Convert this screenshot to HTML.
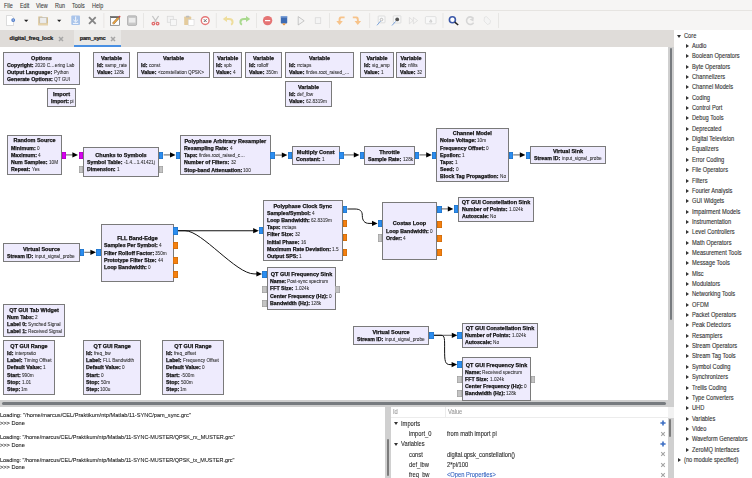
<!DOCTYPE html>
<html><head><meta charset="utf-8"><style>
*{box-sizing:border-box}
body{margin:0;width:752px;height:478px;overflow:hidden;position:relative;background:#f6f5f4;font-family:"Liberation Sans",sans-serif}
.abs{position:absolute}
#menu{position:absolute;left:0;top:0;width:752px;height:11px;background:#f6f5f4;border-bottom:1px solid #e6e4e1}
#menu span{position:absolute;top:1.6px;font-size:6.4px;color:#3a3a3a;line-height:8px;transform-origin:0 50%;transform:scaleX(0.85);-webkit-text-stroke:0.08px #3a3a3a}
#tool{position:absolute;left:0;top:11px;width:752px;height:19px;background:#f6f5f4}
#tabs{position:absolute;left:0;top:30px;width:674px;height:17px;background:#dfdcd9}
#canvas{position:absolute;left:0;top:47px;width:668px;height:353px;background:#fff;overflow:hidden}
.blk{position:absolute;background:#eeebfd;border:1px solid #7a7a7a;white-space:nowrap}
.blk .t{position:absolute;left:0;right:0;will-change:transform;font-weight:bold;text-align:center;color:#111;font-size:5.5px;line-height:8px;-webkit-text-stroke:0.25px #111}
.blk .r{position:absolute;left:2.6px;will-change:transform;line-height:8px;font-size:5.25px}
.blk .r b{color:#111;margin-right:1.3px;-webkit-text-stroke:0.25px #111}
.blk .r i{font-style:normal;color:#2e2e2e;font-size:5.3px;display:inline-block;transform-origin:0 50%;transform:scaleX(0.885);-webkit-text-stroke:0.08px #2e2e2e}
.pt{position:absolute;width:4.5px;height:7.2px;box-shadow:inset 0 0 0 0.5px rgba(0,0,0,0.22)}
svg.cv{position:absolute;left:0;top:0;pointer-events:none}
.ti{position:absolute;width:5px;height:8px}
.trt{position:absolute;left:0;top:2px;width:0;height:0;border-left:3px solid #333;border-top:2.2px solid transparent;border-bottom:2.2px solid transparent}
.tdn{position:absolute;left:0;top:3px;width:0;height:0;border-top:3px solid #333;border-left:2.2px solid transparent;border-right:2.2px solid transparent}
.tt{position:absolute;font-size:6.8px;line-height:8px;color:#333;white-space:nowrap;transform-origin:0 50%;transform:scaleX(0.836);-webkit-text-stroke:0.12px #333}
#right{position:absolute;left:674px;top:30px;width:78px;height:448px;background:#fff;overflow:hidden}
#console{position:absolute;left:0;top:407px;width:385px;height:71px;background:#fff;overflow:hidden}
#console{} .ct{position:absolute;left:0;font-size:6.2px;line-height:7px;color:#222;white-space:nowrap;transform-origin:0 50%;transform:scaleX(0.907);-webkit-text-stroke:0.1px #222}
#vars{position:absolute;left:391px;top:407px;width:277px;height:71px;background:#fff;overflow:hidden}
.vt{position:absolute;font-size:6.6px;line-height:8px;color:#2a2a2a;white-space:nowrap;transform-origin:0 50%;transform:scaleX(0.875);-webkit-text-stroke:0.1px currentColor}
</style></head><body>
<div id="menu"><span style="left:4.2px">File</span><span style="left:19.6px">Edit</span><span style="left:36.1px">View</span><span style="left:55.1px">Run</span><span style="left:72.2px">Tools</span><span style="left:92.1px">Help</span></div>
<div id="tool"></div>
<svg class="abs" style="left:0;top:0" width="752" height="30" viewBox="0 0 752 30">
<g>
<path d="M6.5,15.5 H11.8 L13.5,17.2 V25.5 H6.5 Z" fill="#fff" stroke="#c8c8c8" stroke-width="0.6"/>
<circle cx="13.2" cy="20.1" r="1.9" fill="#4a78c8"/><path d="M13.2,19.1 V21.1" stroke="#fff" stroke-width="0.6"/>
<path d="M24,19.7 H28.4 L26.2,21.9 Z" fill="#222"/>
<path d="M38.3,16.4 H42 L43,17.2 H48 V25.2 H38.3 Z" fill="#d6bf8e"/>
<rect x="39.8" y="17.6" width="6.8" height="5.6" fill="#ececec" stroke="#b8b8b8" stroke-width="0.5"/>
<rect x="38.3" y="23.3" width="9.7" height="1.9" fill="#e6d3ab"/>
<path d="M57.1,19.7 H61.3 L59.2,21.9 Z" fill="#222"/>
<rect x="71.3" y="15.5" width="8.7" height="9.6" rx="1" fill="#a9c4ea"/>
<path d="M75.65,16.5 V21.5 M73.4,19.8 L75.65,22 L77.9,19.8 M73,23.4 H78.3" stroke="#fff" stroke-width="0.9" fill="none"/>
<path d="M89,17.2 L95.7,23.9 M95.7,17.2 L89,23.9" stroke="#858585" stroke-width="1.8"/>
<path d="M103.9,13 V28" stroke="#dedcd9" stroke-width="0.6"/>
<rect x="110.6" y="16.6" width="8.8" height="8.7" fill="#fff" stroke="#6e6e6e" stroke-width="0.7"/>
<rect x="110.6" y="16.6" width="8.8" height="1.3" fill="#5a5a5a"/>
<path d="M113,23.8 L118.6,17.8" stroke="#7a5a30" stroke-width="2.2"/><path d="M113,23.8 L118.6,17.8" stroke="#f2a842" stroke-width="1.5"/>
<circle cx="119.6" cy="16.6" r="0.9" fill="#e04040"/>
<rect x="127.5" y="15.8" width="9.1" height="9.6" rx="1.2" fill="#c9c9c9" stroke="#9a9a9a" stroke-width="0.6"/>
<rect x="128.8" y="18" width="6.6" height="4.6" fill="#ececec"/>
<path d="M143.5,13 V28" stroke="#dedcd9" stroke-width="0.6"/>
<path d="M152.4,16 L156.4,22 M158.6,16 L154.6,22" stroke="#c4c4c4" stroke-width="1.3"/>
<circle cx="153.4" cy="23.6" r="1.3" fill="none" stroke="#e06c6c" stroke-width="1.3"/>
<circle cx="157.6" cy="23.6" r="1.3" fill="none" stroke="#e06c6c" stroke-width="1.3"/>
<rect x="167.2" y="16.2" width="6" height="6" fill="#f3f3f3" stroke="#d2d2d2" stroke-width="0.6"/>
<rect x="170.6" y="19.3" width="6" height="6" fill="#f6f6f6" stroke="#d2d2d2" stroke-width="0.6"/>
<rect x="184.2" y="16.6" width="7" height="8.4" rx="0.6" fill="#e4cb9c"/>
<rect x="186" y="15.8" width="3.4" height="1.6" rx="0.5" fill="#bdbdbd"/>
<rect x="188.2" y="19.6" width="5.8" height="5.7" fill="#fff" stroke="#cfcfcf" stroke-width="0.5"/>
<circle cx="205.2" cy="20.6" r="3.9" fill="#fff" stroke="#e57676" stroke-width="1.4"/>
<path d="M203.8,19.2 L206.6,22 M206.6,19.2 L203.8,22" stroke="#6a6a6a" stroke-width="1"/>
<path d="M216.3,13 V28" stroke="#dedcd9" stroke-width="0.6"/>
<path d="M226.5,19 H229 C231.6,19 232.6,20.6 232.6,22.2 C232.6,23.4 231.9,24.2 231,24.6" fill="none" stroke="#eedd9c" stroke-width="2"/>
<path d="M222.8,19 L227,15.9 L227,22.1 Z" fill="#eedd9c"/>
<path d="M246.5,19 H244 C241.4,19 240.4,20.6 240.4,22.2 C240.4,23.4 241.1,24.2 242,24.6" fill="none" stroke="#a9d98e" stroke-width="2"/>
<path d="M250.2,19 L246,15.9 L246,22.1 Z" fill="#a9d98e"/>
<path d="M256.5,13 V28" stroke="#dedcd9" stroke-width="0.6"/>
<circle cx="267.6" cy="20.6" r="4.7" fill="#e57474"/>
<rect x="265" y="20" width="5.2" height="1.2" fill="#fff"/>
<rect x="280.8" y="16" width="6.4" height="7.6" rx="0.8" fill="#3d6bb3"/>
<rect x="280.8" y="16" width="6.4" height="1.6" fill="#7b9fd6"/>
<path d="M282,23.5 H286 L284,25.6 Z" fill="#f0922e"/>
<path d="M298.2,16.6 L304.2,20.8 L298.2,25 Z" fill="#f3f3f3" stroke="#a8a8a8" stroke-width="0.6"/>
<rect x="315.2" y="17.8" width="5.6" height="5.6" fill="#f4f4f4" stroke="#d0d0d0" stroke-width="0.6"/>
<path d="M329.5,13 V28" stroke="#dedcd9" stroke-width="0.6"/>
<path d="M344.6,16.5 H341 C339,16.5 338.6,18 338.6,20 V21 H336.3 L339.6,25 L342.8,21 H340.5 V20 C340.5,18.8 341,18.3 342,18.3 H344.6 Z" fill="#f7c38a"/>
<path d="M352.8,16.5 H356.4 C358.4,16.5 358.8,18 358.8,20 V21 H361.1 L357.8,25 L354.6,21 H356.9 V20 C356.9,18.8 356.4,18.3 355.4,18.3 H352.8 Z" fill="#f7c38a"/>
<path d="M369.6,13 V28" stroke="#dedcd9" stroke-width="0.6"/>
<rect x="378.2" y="16" width="6.8" height="6.8" rx="0.6" fill="#f8f8f8" stroke="#cfcfcf" stroke-width="0.6"/>
<circle cx="381.5" cy="19.6" r="1.3" fill="none" stroke="#9a9a9a" stroke-width="0.6"/>
<path d="M377,25.3 L380.6,21" stroke="#7fa6dc" stroke-width="1"/>
<rect x="393.3" y="15.8" width="7.6" height="7.2" rx="0.6" fill="#f8f8f8" stroke="#cfcfcf" stroke-width="0.6"/>
<circle cx="397.2" cy="19.4" r="1.9" fill="#555"/>
<path d="M392,25.5 L395.6,21.4" stroke="#7fa6dc" stroke-width="1"/>
<path d="M409.4,17.4 L413,20.6 L409.4,23.8 Z M413.4,17.4 L417.6,20.6 L413.4,23.8 Z" fill="none" stroke="#d4d4d4" stroke-width="0.6"/>
<rect x="425.4" y="16.6" width="10.6" height="7.2" rx="1" fill="#f8f8f8" stroke="#d2d2d2" stroke-width="0.6"/>
<path d="M429.6,22 L430.8,19.6 L432,22 Z" fill="none" stroke="#aaa" stroke-width="0.5"/>
<path d="M443,13 V28" stroke="#dedcd9" stroke-width="0.6"/>
<circle cx="452.4" cy="19.8" r="3" fill="#fff" stroke="#3b58a8" stroke-width="1.6"/>
<path d="M454.8,22.2 L458.2,25" stroke="#222" stroke-width="1.5"/>
<path d="M473.2,18.2 A3.8,3.8 0 1 0 473.6,22.6" fill="none" stroke="#d6d6d6" stroke-width="1.6"/>
<path d="M469.6,19.4 L473.8,17.4 L473.4,21.6 Z" fill="#d6d6d6"/>
<path d="M484.5,17.2 L486.5,16.6 L490.5,20.8 L490,23.5 L487.5,24.5 L484,21 Z" fill="#f4f4f4" stroke="#dadada" stroke-width="0.6"/>
<path d="M498.5,13 V28" stroke="#dedcd9" stroke-width="0.6"/>
</g></svg>

<div id="tabs">
 <div class="abs" style="left:74px;top:0;width:47px;height:17px;background:#e9e8e6"></div>
 <div class="abs" style="left:74px;top:15px;width:47px;height:1.8px;background:#4a90e2"></div>
 <div class="abs" style="left:9.6px;top:3.6px;font-size:5.7px;font-weight:bold;color:#222;line-height:8px;letter-spacing:-0.1px;-webkit-text-stroke:0.22px #222">digital_freq_lock</div>
 <svg class="abs" style="left:58px;top:5.8px" width="6" height="6" viewBox="0 0 6 6"><path d="M1,1 L5,5 M5,1 L1,5" stroke="#a6a6a6" stroke-width="1.5"/></svg>
 <div class="abs" style="left:79.7px;top:3.6px;font-size:5.7px;font-weight:bold;color:#222;line-height:8px;letter-spacing:-0.25px;-webkit-text-stroke:0.22px #222">pam_sync</div>
 <svg class="abs" style="left:109.6px;top:5.8px" width="6" height="6" viewBox="0 0 6 6"><path d="M1,1 L5,5 M5,1 L1,5" stroke="#a6a6a6" stroke-width="1.5"/></svg>
</div>
<div id="canvas"></div>
<div class="abs" style="left:668px;top:47px;width:6px;height:360px;background:#cfcfcf"></div>
<div class="abs" style="left:669.6px;top:48.2px;width:2.5px;height:272px;background:#777b7f;border-radius:1.2px"></div>
<div class="abs" style="left:0;top:400.4px;width:668px;height:6.4px;background:#cfcfcf"></div>
<div class="abs" style="left:1.5px;top:402px;width:664.5px;height:3.2px;background:#777b7f;border-radius:1.5px"></div>
<div class="blk" style="left:3px;top:52px;width:77px;height:33px"><div class="t" style="top:0.00px;transform:translateY(0.80px)">Options</div><div class="r" style="top:8.00px;transform:translateY(0.00px)"><b>Copyright:</b><i>2020 C…ering Lab</i></div><div class="r" style="top:15.00px;transform:translateY(0.20px)"><b>Output Language:</b><i>Python</i></div><div class="r" style="top:22.00px;transform:translateY(0.40px)"><b>Generate Options:</b><i>QT GUI</i></div></div><div class="blk" style="left:47px;top:88px;width:29px;height:18.5px"><div class="t" style="top:0.00px;transform:translateY(0.75px)">Import</div><div class="r" style="top:7.00px;transform:translateY(0.95px)"><b>Import:</b><i>pi</i></div></div><div class="blk" style="left:93px;top:52px;width:37px;height:26px"><div class="t" style="top:0.00px;transform:translateY(0.90px)">Variable</div><div class="r" style="top:8.00px;transform:translateY(0.10px)"><b>Id:</b><i>samp_rate</i></div><div class="r" style="top:15.00px;transform:translateY(0.30px)"><b>Value:</b><i>128k</i></div></div><div class="blk" style="left:137px;top:52px;width:73px;height:26px"><div class="t" style="top:0.00px;transform:translateY(0.90px)">Variable</div><div class="r" style="top:8.00px;transform:translateY(0.10px)"><b>Id:</b><i>const</i></div><div class="r" style="top:15.00px;transform:translateY(0.30px)"><b>Value:</b><i>&lt;constellation QPSK&gt;</i></div></div><div class="blk" style="left:212.5px;top:52px;width:29.5px;height:26px"><div class="t" style="top:0.00px;transform:translateY(0.90px)">Variable</div><div class="r" style="top:8.00px;transform:translateY(0.10px)"><b>Id:</b><i>spb</i></div><div class="r" style="top:15.00px;transform:translateY(0.30px)"><b>Value:</b><i>4</i></div></div><div class="blk" style="left:245px;top:52px;width:37px;height:26px"><div class="t" style="top:0.00px;transform:translateY(0.90px)">Variable</div><div class="r" style="top:8.00px;transform:translateY(0.10px)"><b>Id:</b><i>rolloff</i></div><div class="r" style="top:15.00px;transform:translateY(0.30px)"><b>Value:</b><i>350m</i></div></div><div class="blk" style="left:285px;top:52px;width:69px;height:26px"><div class="t" style="top:0.00px;transform:translateY(0.90px)">Variable</div><div class="r" style="top:8.00px;transform:translateY(0.10px)"><b>Id:</b><i>rrctaps</i></div><div class="r" style="top:15.00px;transform:translateY(0.30px)"><b>Value:</b><i>firdes.root_raised_…</i></div></div><div class="blk" style="left:285px;top:81px;width:47px;height:26px"><div class="t" style="top:0.00px;transform:translateY(0.90px)">Variable</div><div class="r" style="top:8.00px;transform:translateY(0.10px)"><b>Id:</b><i>def_lbw</i></div><div class="r" style="top:15.00px;transform:translateY(0.30px)"><b>Value:</b><i>62.8319m</i></div></div><div class="blk" style="left:360px;top:52px;width:34px;height:26px"><div class="t" style="top:0.00px;transform:translateY(0.90px)">Variable</div><div class="r" style="top:8.00px;transform:translateY(0.10px)"><b>Id:</b><i>sig_amp</i></div><div class="r" style="top:15.00px;transform:translateY(0.30px)"><b>Value:</b><i>1</i></div></div><div class="blk" style="left:396px;top:52px;width:30px;height:26px"><div class="t" style="top:0.00px;transform:translateY(0.90px)">Variable</div><div class="r" style="top:8.00px;transform:translateY(0.10px)"><b>Id:</b><i>nfilts</i></div><div class="r" style="top:15.00px;transform:translateY(0.30px)"><b>Value:</b><i>32</i></div></div><div class="blk" style="left:7px;top:134.5px;width:55px;height:40.5px"><div class="t" style="top:0.50px;transform:translateY(0.45px)">Random Source</div><div class="r" style="top:7.50px;transform:translateY(0.65px)"><b>Minimum:</b><i>0</i></div><div class="r" style="top:14.50px;transform:translateY(0.85px)"><b>Maximum:</b><i>4</i></div><div class="r" style="top:22.50px;transform:translateY(0.05px)"><b>Num Samples:</b><i>10M</i></div><div class="r" style="top:29.50px;transform:translateY(0.25px)"><b>Repeat:</b><i>Yes</i></div></div><div class="blk" style="left:83px;top:147px;width:76px;height:29.5px"><div class="t" style="top:2.00px;transform:translateY(0.65px)">Chunks to Symbols</div><div class="r" style="top:9.00px;transform:translateY(0.85px)"><b>Symbol Table:</b><i>-1.4…1.41421j</i></div><div class="r" style="top:17.00px;transform:translateY(0.05px)"><b>Dimension:</b><i>1</i></div></div><div class="blk" style="left:180px;top:135px;width:90.5px;height:40px"><div class="t" style="top:0.00px;transform:translateY(0.70px)">Polyphase Arbitrary Resampler</div><div class="r" style="top:7.00px;transform:translateY(0.90px)"><b>Resampling Rate:</b><i>4</i></div><div class="r" style="top:15.00px;transform:translateY(0.10px)"><b>Taps:</b><i>firdes.root_raised_c…</i></div><div class="r" style="top:22.00px;transform:translateY(0.30px)"><b>Number of Filters:</b><i>32</i></div><div class="r" style="top:29.00px;transform:translateY(0.50px)"><b>Stop-band Attenuation:</b><i>100</i></div></div><div class="blk" style="left:292px;top:145.5px;width:47.5px;height:19px"><div class="t" style="top:0.50px;transform:translateY(0.50px)">Multiply Const</div><div class="r" style="top:7.50px;transform:translateY(0.70px)"><b>Constant:</b><i>1</i></div></div><div class="blk" style="left:364px;top:145.5px;width:51px;height:19px"><div class="t" style="top:0.50px;transform:translateY(0.50px)">Throttle</div><div class="r" style="top:7.50px;transform:translateY(0.70px)"><b>Sample Rate:</b><i>128k</i></div></div><div class="blk" style="left:436.4px;top:127.5px;width:72.5px;height:54.5px"><div class="t" style="top:0.50px;transform:translateY(0.25px)">Channel Model</div><div class="r" style="top:7.50px;transform:translateY(0.45px)"><b>Noise Voltage:</b><i>10m</i></div><div class="r" style="top:14.50px;transform:translateY(0.65px)"><b>Frequency Offset:</b><i>0</i></div><div class="r" style="top:21.50px;transform:translateY(0.85px)"><b>Epsilon:</b><i>1</i></div><div class="r" style="top:29.50px;transform:translateY(0.05px)"><b>Taps:</b><i>1</i></div><div class="r" style="top:36.50px;transform:translateY(0.25px)"><b>Seed:</b><i>0</i></div><div class="r" style="top:43.50px;transform:translateY(0.45px)"><b>Block Tag Propagation:</b><i>No</i></div></div><div class="blk" style="left:530px;top:145.5px;width:76px;height:18.5px"><div class="t" style="top:0.50px;transform:translateY(0.25px)">Virtual Sink</div><div class="r" style="top:7.50px;transform:translateY(0.45px)"><b>Stream ID:</b><i>input_signal_probe</i></div></div><div class="blk" style="left:3px;top:243px;width:77px;height:18.5px"><div class="t" style="top:0.00px;transform:translateY(0.75px)">Virtual Source</div><div class="r" style="top:7.00px;transform:translateY(0.95px)"><b>Stream ID:</b><i>input_signal_probe</i></div></div><div class="blk" style="left:100.5px;top:223.5px;width:73px;height:58px"><div class="t" style="top:9.50px;transform:translateY(0.20px)">FLL Band-Edge</div><div class="r" style="top:16.50px;transform:translateY(0.40px)"><b>Samples Per Symbol:</b><i>4</i></div><div class="r" style="top:23.50px;transform:translateY(0.60px)"><b>Filter Rolloff Factor:</b><i>350m</i></div><div class="r" style="top:30.50px;transform:translateY(0.80px)"><b>Prototype Filter Size:</b><i>44</i></div><div class="r" style="top:38.50px;transform:translateY(0.00px)"><b>Loop Bandwidth:</b><i>0</i></div></div><div class="blk" style="left:263.3px;top:200px;width:79.5px;height:61.2px"><div class="t" style="top:0.00px;transform:translateY(0.50px)">Polyphase Clock Sync</div><div class="r" style="top:7.00px;transform:translateY(0.70px)"><b>Samples/Symbol:</b><i>4</i></div><div class="r" style="top:14.00px;transform:translateY(0.90px)"><b>Loop Bandwidth:</b><i>62.8319m</i></div><div class="r" style="top:22.00px;transform:translateY(0.10px)"><b>Taps:</b><i>rrctaps</i></div><div class="r" style="top:29.00px;transform:translateY(0.30px)"><b>Filter Size:</b><i>32</i></div><div class="r" style="top:36.00px;transform:translateY(0.50px)"><b>Initial Phase:</b><i>16</i></div><div class="r" style="top:43.00px;transform:translateY(0.70px)"><b>Maximum Rate Deviation:</b><i>1.5</i></div><div class="r" style="top:50.00px;transform:translateY(0.90px)"><b>Output SPS:</b><i>1</i></div></div><div class="blk" style="left:382.3px;top:201.5px;width:55px;height:58px"><div class="t" style="top:16.50px;transform:translateY(0.40px)">Costas Loop</div><div class="r" style="top:23.50px;transform:translateY(0.60px)"><b>Loop Bandwidth:</b><i>0</i></div><div class="r" style="top:30.50px;transform:translateY(0.80px)"><b>Order:</b><i>4</i></div></div><div class="blk" style="left:458px;top:196.5px;width:76px;height:25px"><div class="t" style="top:-0.50px;transform:translateY(0.90px)">QT GUI Constellation Sink</div><div class="r" style="top:7.50px;transform:translateY(0.10px)"><b>Number of Points:</b><i>1.024k</i></div><div class="r" style="top:14.50px;transform:translateY(0.30px)"><b>Autoscale:</b><i>No</i></div></div><div class="blk" style="left:266.5px;top:266.5px;width:69px;height:43.5px"><div class="t" style="top:1.50px;transform:translateY(0.95px)">QT GUI Frequency Sink</div><div class="r" style="top:9.50px;transform:translateY(0.15px)"><b>Name:</b><i>Post-sync spectrum</i></div><div class="r" style="top:16.50px;transform:translateY(0.35px)"><b>FFT Size:</b><i>1.024k</i></div><div class="r" style="top:23.50px;transform:translateY(0.55px)"><b>Center Frequency (Hz):</b><i>0</i></div><div class="r" style="top:30.50px;transform:translateY(0.75px)"><b>Bandwidth (Hz):</b><i>128k</i></div></div><div class="blk" style="left:3px;top:304px;width:62px;height:33px"><div class="t" style="top:0.00px;transform:translateY(0.80px)">QT GUI Tab Widget</div><div class="r" style="top:8.00px;transform:translateY(0.00px)"><b>Num Tabs:</b><i>2</i></div><div class="r" style="top:15.00px;transform:translateY(0.20px)"><b>Label 0:</b><i>Synched Signal</i></div><div class="r" style="top:22.00px;transform:translateY(0.40px)"><b>Label 1:</b><i>Received Signal</i></div></div><div class="blk" style="left:3px;top:340px;width:52px;height:54.5px"><div class="t" style="top:0.00px;transform:translateY(0.75px)">QT GUI Range</div><div class="r" style="top:7.00px;transform:translateY(0.95px)"><b>Id:</b><i>interpratio</i></div><div class="r" style="top:15.00px;transform:translateY(0.15px)"><b>Label:</b><i>Timing Offset</i></div><div class="r" style="top:22.00px;transform:translateY(0.35px)"><b>Default Value:</b><i>1</i></div><div class="r" style="top:29.00px;transform:translateY(0.55px)"><b>Start:</b><i>990m</i></div><div class="r" style="top:36.00px;transform:translateY(0.75px)"><b>Stop:</b><i>1.01</i></div><div class="r" style="top:43.00px;transform:translateY(0.95px)"><b>Step:</b><i>1m</i></div></div><div class="blk" style="left:82.5px;top:340px;width:58.5px;height:54.5px"><div class="t" style="top:0.00px;transform:translateY(0.75px)">QT GUI Range</div><div class="r" style="top:7.00px;transform:translateY(0.95px)"><b>Id:</b><i>freq_bw</i></div><div class="r" style="top:15.00px;transform:translateY(0.15px)"><b>Label:</b><i>FLL Bandwidth</i></div><div class="r" style="top:22.00px;transform:translateY(0.35px)"><b>Default Value:</b><i>0</i></div><div class="r" style="top:29.00px;transform:translateY(0.55px)"><b>Start:</b><i>0</i></div><div class="r" style="top:36.00px;transform:translateY(0.75px)"><b>Stop:</b><i>50m</i></div><div class="r" style="top:43.00px;transform:translateY(0.95px)"><b>Step:</b><i>100u</i></div></div><div class="blk" style="left:162px;top:340px;width:62px;height:54.5px"><div class="t" style="top:0.00px;transform:translateY(0.75px)">QT GUI Range</div><div class="r" style="top:7.00px;transform:translateY(0.95px)"><b>Id:</b><i>freq_offset</i></div><div class="r" style="top:15.00px;transform:translateY(0.15px)"><b>Label:</b><i>Frequency Offset</i></div><div class="r" style="top:22.00px;transform:translateY(0.35px)"><b>Default Value:</b><i>0</i></div><div class="r" style="top:29.00px;transform:translateY(0.55px)"><b>Start:</b><i>-500m</i></div><div class="r" style="top:36.00px;transform:translateY(0.75px)"><b>Stop:</b><i>500m</i></div><div class="r" style="top:43.00px;transform:translateY(0.95px)"><b>Step:</b><i>1m</i></div></div><div class="blk" style="left:353.3px;top:326px;width:76.2px;height:18.5px"><div class="t" style="top:0.00px;transform:translateY(0.75px)">Virtual Source</div><div class="r" style="top:7.00px;transform:translateY(0.95px)"><b>Stream ID:</b><i>input_signal_probe</i></div></div><div class="blk" style="left:461.6px;top:322.5px;width:76px;height:25px"><div class="t" style="top:-0.50px;transform:translateY(0.90px)">QT GUI Constellation Sink</div><div class="r" style="top:7.50px;transform:translateY(0.10px)"><b>Number of Points:</b><i>1.024k</i></div><div class="r" style="top:14.50px;transform:translateY(0.30px)"><b>Autoscale:</b><i>No</i></div></div><div class="blk" style="left:461.6px;top:357.2px;width:69px;height:43.5px"><div class="t" style="top:1.80px;transform:translateY(0.65px)">QT GUI Frequency Sink</div><div class="r" style="top:8.80px;transform:translateY(0.85px)"><b>Name:</b><i>Received spectrum</i></div><div class="r" style="top:16.80px;transform:translateY(0.05px)"><b>FFT Size:</b><i>1.024k</i></div><div class="r" style="top:23.80px;transform:translateY(0.25px)"><b>Center Frequency (Hz):</b><i>0</i></div><div class="r" style="top:30.80px;transform:translateY(0.45px)"><b>Bandwidth (Hz):</b><i>128k</i></div></div>
<div class="pt" style="left:61.9px;top:151.5px;background:#d600f0"></div><div class="pt" style="left:78.5px;top:151.5px;background:#d600f0"></div><div class="pt" style="left:78.5px;top:166.2px;background:#c4c4c4"></div><div class="pt" style="left:158.9px;top:151.5px;background:#2b8df0"></div><div class="pt" style="left:158.9px;top:166.2px;background:#c4c4c4"></div><div class="pt" style="left:175.5px;top:151.7px;background:#2b8df0"></div><div class="pt" style="left:270.4px;top:151.7px;background:#2b8df0"></div><div class="pt" style="left:287.5px;top:151.5px;background:#2b8df0"></div><div class="pt" style="left:339.4px;top:151.5px;background:#2b8df0"></div><div class="pt" style="left:359.5px;top:151.5px;background:#2b8df0"></div><div class="pt" style="left:414.9px;top:151.5px;background:#2b8df0"></div><div class="pt" style="left:431.9px;top:151.5px;background:#2b8df0"></div><div class="pt" style="left:508.8px;top:151.5px;background:#2b8df0"></div><div class="pt" style="left:525.5px;top:151.5px;background:#2b8df0"></div><div class="pt" style="left:79.9px;top:249.3px;background:#2b8df0"></div><div class="pt" style="left:96.0px;top:248.9px;background:#2b8df0"></div><div class="pt" style="left:173.4px;top:227.4px;background:#2b8df0"></div><div class="pt" style="left:173.4px;top:241.6px;background:#f5800f"></div><div class="pt" style="left:173.4px;top:256.5px;background:#f5800f"></div><div class="pt" style="left:173.4px;top:270.5px;background:#f5800f"></div><div class="pt" style="left:258.8px;top:227.2px;background:#2b8df0"></div><div class="pt" style="left:342.7px;top:205.6px;background:#2b8df0"></div><div class="pt" style="left:342.7px;top:219.9px;background:#f5800f"></div><div class="pt" style="left:342.7px;top:234.2px;background:#f5800f"></div><div class="pt" style="left:342.7px;top:249.1px;background:#f5800f"></div><div class="pt" style="left:377.8px;top:220.0px;background:#2b8df0"></div><div class="pt" style="left:377.8px;top:234.4px;background:#c4c4c4"></div><div class="pt" style="left:437.2px;top:205.7px;background:#2b8df0"></div><div class="pt" style="left:437.2px;top:220.5px;background:#f5800f"></div><div class="pt" style="left:437.2px;top:234.9px;background:#f5800f"></div><div class="pt" style="left:437.2px;top:249.2px;background:#f5800f"></div><div class="pt" style="left:453.5px;top:205.4px;background:#2b8df0"></div><div class="pt" style="left:262.0px;top:270.6px;background:#2b8df0"></div><div class="pt" style="left:262.0px;top:285.7px;background:#c4c4c4"></div><div class="pt" style="left:262.0px;top:299.7px;background:#c4c4c4"></div><div class="pt" style="left:335.4px;top:285.7px;background:#c4c4c4"></div><div class="pt" style="left:429.4px;top:331.9px;background:#2b8df0"></div><div class="pt" style="left:457.1px;top:332.2px;background:#2b8df0"></div><div class="pt" style="left:457.1px;top:361.3px;background:#2b8df0"></div><div class="pt" style="left:457.1px;top:375.5px;background:#c4c4c4"></div><div class="pt" style="left:457.1px;top:389.6px;background:#c4c4c4"></div><div class="pt" style="left:530.5px;top:375.5px;background:#c4c4c4"></div>
<svg class="cv" width="752" height="478" viewBox="0 0 752 478"><path d="M66,154.9 L74,154.9" stroke="#6a6a6a" stroke-width="1.1" fill="none"/><path d="M72.4,152.3 L78,154.9 L72.4,157.5 Z" fill="#000"/><path d="M163.6,154.9 L171.6,154.9" stroke="#6a6a6a" stroke-width="1.1" fill="none"/><path d="M170.0,152.3 L175.6,154.9 L170.0,157.5 Z" fill="#000"/><path d="M275.2,155.1 L283.4,155.1" stroke="#6a6a6a" stroke-width="1.1" fill="none"/><path d="M281.79999999999995,152.5 L287.4,155.1 L281.79999999999995,157.7 Z" fill="#000"/><path d="M343.8,154.9 L355.4,154.9" stroke="#6a6a6a" stroke-width="1.1" fill="none"/><path d="M353.79999999999995,152.3 L359.4,154.9 L353.79999999999995,157.5 Z" fill="#000"/><path d="M419.4,154.9 L427.8,154.9" stroke="#6a6a6a" stroke-width="1.1" fill="none"/><path d="M426.2,152.3 L431.8,154.9 L426.2,157.5 Z" fill="#000"/><path d="M513.2,154.9 L521.4,154.9" stroke="#6a6a6a" stroke-width="1.1" fill="none"/><path d="M519.8,152.3 L525.4,154.9 L519.8,157.5 Z" fill="#000"/><path d="M84.3,252.3 L92,252.3" stroke="#6a6a6a" stroke-width="1.1" fill="none"/><path d="M90.4,249.70000000000002 L96,252.3 L90.4,254.9 Z" fill="#000"/><path d="M178.2,230.7 L254.8,230.7" stroke="#111" stroke-width="1.1" fill="none"/><path d="M253.20000000000002,228.1 L258.8,230.7 L253.20000000000002,233.29999999999998 Z" fill="#000"/><path d="M441,208.9 L449.4,208.9" stroke="#6a6a6a" stroke-width="1.1" fill="none"/><path d="M447.79999999999995,206.3 L453.4,208.9 L447.79999999999995,211.5 Z" fill="#000"/><path d="M434,335.3 L453.4,335.3" stroke="#6a6a6a" stroke-width="1.1" fill="none"/><path d="M451.79999999999995,332.7 L457.4,335.3 L451.79999999999995,337.90000000000003 Z" fill="#000"/><path d="M178,230.7 L185,230.7 C202,230.7 236,273.9 254,273.9 L257,273.9" stroke="#111" stroke-width="1" fill="none"/><path d="M256.4,271.29999999999995 L262,273.9 L256.4,276.5 Z" fill="#000"/><path d="M347.4,209 L355,209 C360,209 362.3,211 362.3,215.5 C362.3,220.5 364.5,223.4 369,223.4 L372.5,223.4" stroke="#111" stroke-width="1" fill="none"/><path d="M372.0,220.8 L377.6,223.4 L372.0,226.0 Z" fill="#000"/><path d="M434,335.3 L441,335.3 C445,335.3 444.6,339 444.6,350 C444.6,361 445,364.6 450,364.6 L453,364.6" stroke="#111" stroke-width="1" fill="none"/><path d="M451.59999999999997,362.0 L457.2,364.6 L451.59999999999997,367.20000000000005 Z" fill="#000"/></svg>
<div id="right"></div>
<div class="ti" style="top:31.60px;left:677px"><span class="tdn"></span></div><div class="tt" style="top:31.60px;left:684px">Core</div><div class="ti" style="top:41.95px;left:685.5px"><span class="trt"></span></div><div class="tt" style="top:41.95px;left:692px">Audio</div><div class="ti" style="top:52.30px;left:685.5px"><span class="trt"></span></div><div class="tt" style="top:52.30px;left:692px">Boolean Operators</div><div class="ti" style="top:62.65px;left:685.5px"><span class="trt"></span></div><div class="tt" style="top:62.65px;left:692px">Byte Operators</div><div class="ti" style="top:73.00px;left:685.5px"><span class="trt"></span></div><div class="tt" style="top:73.00px;left:692px">Channelizers</div><div class="ti" style="top:83.35px;left:685.5px"><span class="trt"></span></div><div class="tt" style="top:83.35px;left:692px">Channel Models</div><div class="ti" style="top:93.70px;left:685.5px"><span class="trt"></span></div><div class="tt" style="top:93.70px;left:692px">Coding</div><div class="ti" style="top:104.05px;left:685.5px"><span class="trt"></span></div><div class="tt" style="top:104.05px;left:692px">Control Port</div><div class="ti" style="top:114.40px;left:685.5px"><span class="trt"></span></div><div class="tt" style="top:114.40px;left:692px">Debug Tools</div><div class="ti" style="top:124.75px;left:685.5px"><span class="trt"></span></div><div class="tt" style="top:124.75px;left:692px">Deprecated</div><div class="ti" style="top:135.10px;left:685.5px"><span class="trt"></span></div><div class="tt" style="top:135.10px;left:692px">Digital Television</div><div class="ti" style="top:145.45px;left:685.5px"><span class="trt"></span></div><div class="tt" style="top:145.45px;left:692px">Equalizers</div><div class="ti" style="top:155.80px;left:685.5px"><span class="trt"></span></div><div class="tt" style="top:155.80px;left:692px">Error Coding</div><div class="ti" style="top:166.15px;left:685.5px"><span class="trt"></span></div><div class="tt" style="top:166.15px;left:692px">File Operators</div><div class="ti" style="top:176.50px;left:685.5px"><span class="trt"></span></div><div class="tt" style="top:176.50px;left:692px">Filters</div><div class="ti" style="top:186.85px;left:685.5px"><span class="trt"></span></div><div class="tt" style="top:186.85px;left:692px">Fourier Analysis</div><div class="ti" style="top:197.20px;left:685.5px"><span class="trt"></span></div><div class="tt" style="top:197.20px;left:692px">GUI Widgets</div><div class="ti" style="top:207.55px;left:685.5px"><span class="trt"></span></div><div class="tt" style="top:207.55px;left:692px">Impairment Models</div><div class="ti" style="top:217.90px;left:685.5px"><span class="trt"></span></div><div class="tt" style="top:217.90px;left:692px">Instrumentation</div><div class="ti" style="top:228.25px;left:685.5px"><span class="trt"></span></div><div class="tt" style="top:228.25px;left:692px">Level Controllers</div><div class="ti" style="top:238.60px;left:685.5px"><span class="trt"></span></div><div class="tt" style="top:238.60px;left:692px">Math Operators</div><div class="ti" style="top:248.95px;left:685.5px"><span class="trt"></span></div><div class="tt" style="top:248.95px;left:692px">Measurement Tools</div><div class="ti" style="top:259.30px;left:685.5px"><span class="trt"></span></div><div class="tt" style="top:259.30px;left:692px">Message Tools</div><div class="ti" style="top:269.65px;left:685.5px"><span class="trt"></span></div><div class="tt" style="top:269.65px;left:692px">Misc</div><div class="ti" style="top:280.00px;left:685.5px"><span class="trt"></span></div><div class="tt" style="top:280.00px;left:692px">Modulators</div><div class="ti" style="top:290.35px;left:685.5px"><span class="trt"></span></div><div class="tt" style="top:290.35px;left:692px">Networking Tools</div><div class="ti" style="top:300.70px;left:685.5px"><span class="trt"></span></div><div class="tt" style="top:300.70px;left:692px">OFDM</div><div class="ti" style="top:311.05px;left:685.5px"><span class="trt"></span></div><div class="tt" style="top:311.05px;left:692px">Packet Operators</div><div class="ti" style="top:321.40px;left:685.5px"><span class="trt"></span></div><div class="tt" style="top:321.40px;left:692px">Peak Detectors</div><div class="ti" style="top:331.75px;left:685.5px"><span class="trt"></span></div><div class="tt" style="top:331.75px;left:692px">Resamplers</div><div class="ti" style="top:342.10px;left:685.5px"><span class="trt"></span></div><div class="tt" style="top:342.10px;left:692px">Stream Operators</div><div class="ti" style="top:352.45px;left:685.5px"><span class="trt"></span></div><div class="tt" style="top:352.45px;left:692px">Stream Tag Tools</div><div class="ti" style="top:362.80px;left:685.5px"><span class="trt"></span></div><div class="tt" style="top:362.80px;left:692px">Symbol Coding</div><div class="ti" style="top:373.15px;left:685.5px"><span class="trt"></span></div><div class="tt" style="top:373.15px;left:692px">Synchronizers</div><div class="ti" style="top:383.50px;left:685.5px"><span class="trt"></span></div><div class="tt" style="top:383.50px;left:692px">Trellis Coding</div><div class="ti" style="top:393.85px;left:685.5px"><span class="trt"></span></div><div class="tt" style="top:393.85px;left:692px">Type Converters</div><div class="ti" style="top:404.20px;left:685.5px"><span class="trt"></span></div><div class="tt" style="top:404.20px;left:692px">UHD</div><div class="ti" style="top:414.55px;left:685.5px"><span class="trt"></span></div><div class="tt" style="top:414.55px;left:692px">Variables</div><div class="ti" style="top:424.90px;left:685.5px"><span class="trt"></span></div><div class="tt" style="top:424.90px;left:692px">Video</div><div class="ti" style="top:435.25px;left:685.5px"><span class="trt"></span></div><div class="tt" style="top:435.25px;left:692px">Waveform Generators</div><div class="ti" style="top:445.60px;left:685.5px"><span class="trt"></span></div><div class="tt" style="top:445.60px;left:692px">ZeroMQ Interfaces</div><div class="ti" style="top:455.95px;left:678px"><span class="trt"></span></div><div class="tt" style="top:455.95px;left:684px">(no module specified)</div>
<div id="console"></div>
<div class="ct" style="top:411.00px;">Loading: "/home/marcus/CEL/Praktikum/ntp/Matlab/11-SYNC/pam_sync.grc"</div><div class="ct" style="top:418.60px;">&gt;&gt;&gt; Done</div><div class="ct" style="top:433.40px;transform:scaleX(0.884)">Loading: "/home/marcus/CEL/Praktikum/ntp/Matlab/11-SYNC-MUSTER/QPSK_rx_MUSTER.grc"</div><div class="ct" style="top:441.00px;">&gt;&gt;&gt; Done</div><div class="ct" style="top:455.80px;transform:scaleX(0.884)">Loading: "/home/marcus/CEL/Praktikum/ntp/Matlab/11-SYNC-MUSTER/QPSK_tx_MUSTER.grc"</div><div class="ct" style="top:463.40px;">&gt;&gt;&gt; Done</div>
<div id="vars"></div>
<div class="vt" style="left:393.4px;top:408.2px;color:#999">Id</div><div class="vt" style="left:447.6px;top:408.2px;color:#999">Value</div><div class="abs" style="left:391px;top:417.3px;width:277px;height:0.6px;background:#ececec"></div><div class="abs" style="left:444.5px;top:407px;width:0.6px;height:10.5px;background:#ececec"></div><div class="ti" style="top:419.10px;left:394.2px"><span class="tdn"></span></div><div class="vt" style="left:400.9px;top:419.50px">Imports</div><svg class="abs" style="left:660px;top:420.10px" width="6" height="6" viewBox="0 0 6 6"><path d="M3,0.4 V5.6 M0.4,3 H5.6" stroke="#3d6fc4" stroke-width="1.6"/></svg><div class="vt" style="left:409px;top:429.90px">import_0</div><div class="vt" style="left:446.9px;top:429.90px;color:#2a2a2a">from math import pi</div><svg class="abs" style="left:660px;top:430.50px" width="6" height="6" viewBox="0 0 6 6"><path d="M1.2,1.2 L4.8,4.8 M4.8,1.2 L1.2,4.8" stroke="#a2a2a2" stroke-width="1.1"/></svg><div class="ti" style="top:439.70px;left:394.2px"><span class="tdn"></span></div><div class="vt" style="left:400.9px;top:440.10px">Variables</div><svg class="abs" style="left:660px;top:440.70px" width="6" height="6" viewBox="0 0 6 6"><path d="M3,0.4 V5.6 M0.4,3 H5.6" stroke="#3d6fc4" stroke-width="1.6"/></svg><div class="vt" style="left:409px;top:450.70px">const</div><div class="vt" style="left:446.9px;top:450.70px;color:#2a2a2a">digital.qpsk_constellation()</div><svg class="abs" style="left:660px;top:451.30px" width="6" height="6" viewBox="0 0 6 6"><path d="M1.2,1.2 L4.8,4.8 M4.8,1.2 L1.2,4.8" stroke="#a2a2a2" stroke-width="1.1"/></svg><div class="vt" style="left:409px;top:460.90px">def_lbw</div><div class="vt" style="left:446.9px;top:460.90px;color:#2a2a2a">2*pi/100</div><svg class="abs" style="left:660px;top:461.50px" width="6" height="6" viewBox="0 0 6 6"><path d="M1.2,1.2 L4.8,4.8 M4.8,1.2 L1.2,4.8" stroke="#a2a2a2" stroke-width="1.1"/></svg><div class="vt" style="left:409px;top:471.40px">freq_bw</div><div class="vt" style="left:446.9px;top:471.40px;color:#2f5fbf">&lt;Open Properties&gt;</div><svg class="abs" style="left:660px;top:472.00px" width="6" height="6" viewBox="0 0 6 6"><path d="M1.2,1.2 L4.8,4.8 M4.8,1.2 L1.2,4.8" stroke="#a2a2a2" stroke-width="1.1"/></svg><div class="abs" style="left:668px;top:407px;width:6px;height:11px;background:#f2f2f2"></div><div class="abs" style="left:668px;top:418px;width:6px;height:60px;background:#d0d0d0"></div><div class="abs" style="left:669.4px;top:419.3px;width:2.1px;height:17.4px;background:#7b7b7b;border-radius:1px"></div><div class="abs" style="left:385px;top:407px;width:6px;height:71px;background:#d0d0d0"></div><div class="abs" style="left:386.5px;top:439.3px;width:2.3px;height:36.4px;background:#7b7b7b;border-radius:1px"></div>
</body></html>
